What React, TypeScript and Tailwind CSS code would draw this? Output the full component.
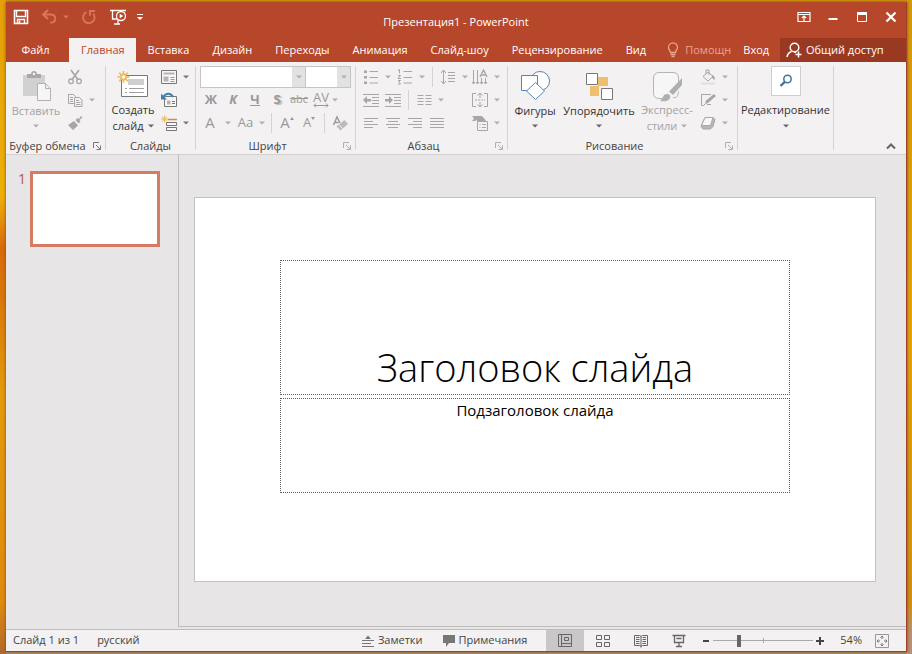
import { useState } from "react";
import type { ReactNode } from "react";

const TABS = ["Главная", "Вставка", "Дизайн", "Переходы", "Анимация", "Слайд-шоу", "Рецензирование", "Вид"];

function Caret({ className = "text-[#b0afb0]" }: { className?: string }) {
  return (
    <svg width="6" height="4" viewBox="0 0 6 4" className={`shrink-0 ${className}`}>
      <path d="M0 0.5h6L3 3.5z" fill="currentColor" />
    </svg>
  );
}

function Icon({ size = 16, children }: { size?: number; children: ReactNode }) {
  return (
    <svg
      width={size}
      height={size}
      viewBox={`0 0 ${size} ${size}`}
      fill="none"
      stroke="currentColor"
      className="shrink-0"
    >
      {children}
    </svg>
  );
}

function Tool({
  label,
  caret,
  className = "w-[22px]",
  children,
}: {
  label: string;
  caret?: string;
  className?: string;
  children: ReactNode;
}) {
  return (
    <button aria-label={label} className={`flex h-[23px] shrink-0 items-center justify-center ${className}`}>
      {children}
      {caret && (
        <span className="flex w-3 shrink-0 justify-end">
          <Caret className={caret} />
        </span>
      )}
    </button>
  );
}

function BigTool({
  icon,
  lines,
  muted,
  className,
}: {
  icon: ReactNode;
  lines: string[];
  muted?: boolean;
  className: string;
}) {
  const caret = <Caret className={muted ? "text-[#b0afb0]" : "text-[#666]"} />;
  return (
    <button
      className={`flex shrink-0 flex-col items-center pt-1 leading-4 whitespace-nowrap ${className} ${
        muted ? "text-[#a3a2a3]" : "text-[#333]"
      }`}
    >
      <span className="flex h-9 items-center justify-center">{icon}</span>
      <span>{lines[0]}</span>
      <span className="flex h-4 items-center gap-1">
        {lines[1]}
        {caret}
      </span>
    </button>
  );
}

function Group({
  label,
  launcher,
  className,
  children,
}: {
  label?: string;
  launcher?: string;
  className: string;
  children: ReactNode;
}) {
  return (
    <section className={`flex shrink-0 py-1 ${className}`}>
      <div className="flex min-w-0 flex-1 flex-col border-r border-[#d4d3d4]">
        <div className="-mt-1 flex h-[72px] pt-[3px]">{children}</div>
        <div className="mt-1 flex h-4 items-center text-[#444]">
          <span className="flex-1 text-center whitespace-nowrap">{label}</span>
          {launcher && (
            <button aria-label={`${label}: параметры`} className={`flex w-4 justify-center ${launcher}`}>
              <svg width="8" height="8" viewBox="0 0 8 8" fill="none" stroke="currentColor">
                <path d="M0.5 6V0.5H6M3 3l4 4M7.5 3.5v4h-4" />
              </svg>
            </button>
          )}
        </div>
      </div>
    </section>
  );
}

const Separator = () => <span className="h-5 w-px shrink-0 bg-[#d4d3d4]" />;

function Lines({ rows }: { rows: [number, number][] }) {
  return (
    <Icon>
      {rows.map(([x, w], i) => (
        <path key={i} d={`M${x} ${3.5 + i * 3}h${w}`} />
      ))}
    </Icon>
  );
}

function TitleBar() {
  return (
    <header className="grid h-9 shrink-0 grid-cols-[1fr_auto_1fr] items-center text-white">
      <div className="flex items-center pb-1.5 pl-[7px]">
        <button aria-label="Сохранить">
          <Icon>
            <path d="M1.500 1.500h13v13h-13z" strokeWidth="1.600" />
            <path d="M3.500 2v5.500h9V2M4.500 14.500v-4h7v4" strokeWidth="1.400" />
            <path d="M6.500 11.500v3" strokeWidth="1.600" />
          </Icon>
        </button>
        <button aria-label="Отменить" className="ml-3 flex items-center gap-1.5 text-[#d9755c]">
          <Icon>
            <path d="M2.500 5.500H9.500c3 0 4.700 1.600 4.700 4s-1.700 4.200-5 4.200" strokeWidth="2" />
            <path d="M7 1L2.200 5.500 7 10" strokeWidth="2.200" />
          </Icon>
          <Caret className="text-[#d9755c]" />
        </button>
        <button aria-label="Повторить" className="ml-3 text-[#d9755c]">
          <Icon>
            <path d="M5.500 3A5.800 5.800 0 1 0 12.200 4.500" strokeWidth="1.900" />
            <path d="M9 6.800V2h5" strokeWidth="1.900" />
          </Icon>
        </button>
        <button aria-label="С начала" className="ml-3">
          <Icon size={18}>
            <path d="M1 2.500h16M3.500 3v8H8M5 16h6M9 12v4" strokeWidth="1.300" />
            <circle cx="12" cy="8" r="4.500" fill="#b7472a" strokeWidth="1.300" />
            <path d="M10.700 5.700v4.600l3.600-2.300z" fill="currentColor" stroke="none" />
          </Icon>
        </button>
        <button aria-label="Настройка панели" className="ml-2.5">
          <svg width="6" height="7" viewBox="0 0 6 7" fill="currentColor">
            <path d="M0 0h6v1H0zM0 3h6L3 6z" />
          </svg>
        </button>
      </div>
      <h1 className="pt-1 leading-4">Презентация1 - PowerPoint</h1>
      <div className="flex items-center justify-end gap-[13px] pr-[7px] pb-1.5">
        <button aria-label="Параметры ленты">
          <Icon>
            <path d="M2 3.500h12v9H2zM2 5.500h12M8 12V7M5.800 9L8 7l2.200 2" strokeWidth="1.200" />
          </Icon>
        </button>
        <button aria-label="Свернуть">
          <Icon>
            <path d="M3.500 10h9" strokeWidth="2" />
          </Icon>
        </button>
        <button aria-label="Развернуть">
          <Icon>
            <path d="M3.500 4.500h9v8h-9z" />
            <path d="M3 4.500h10" strokeWidth="3" />
          </Icon>
        </button>
        <button aria-label="Закрыть">
          <Icon>
            <path d="M3.500 3.500l9 9M12.500 3.500l-9 9" strokeWidth="2.200" />
          </Icon>
        </button>
      </div>
    </header>
  );
}

function RibbonTabs({ active, onSelect }: { active: string; onSelect: (tab: string) => void }) {
  return (
    <nav className="flex h-6 shrink-0 items-center text-white">
      <button className="w-[63px] shrink-0 pr-1">Файл</button>
      {TABS.map((tab) => (
        <button
          key={tab}
          onClick={() => onSelect(tab)}
          className={`h-full shrink-0 pr-[11px] pl-3 whitespace-nowrap ${
            tab === active ? "bg-[#f3f1f2] text-[#b7472a]" : ""
          }`}
        >
          {tab}
        </button>
      ))}
      <button className="flex items-center gap-1 pl-2 text-[#eba48f]">
        <Icon>
          <path
            d="M5.500 10.500C5.500 8.500 3.500 8 3.500 5.300a4.500 4.500 0 0 1 9 0c0 2.700-2 3.200-2 5.200zM5.500 12.500h5M6.500 14.500h3"
            strokeWidth="1.300"
          />
        </Icon>
        Помощн
      </button>
      <button className="ml-3">Вход</button>
      <button className="ml-auto flex h-full w-[126px] shrink-0 items-center gap-1 bg-[#9a3922] pl-1.5 whitespace-nowrap">
        <Icon>
          <circle cx="8.500" cy="5.500" r="4.300" strokeWidth="1.500" />
          <path d="M1 15c.5-3 2-4.700 4.500-5.500M8 9.500l2 1.500M12.500 9.500v6M9.500 12.500h6" strokeWidth="1.500" />
        </Icon>
        Общий доступ
      </button>
    </nav>
  );
}

function ClipboardGroup() {
  return (
    <Group label="Буфер обмена" launcher="text-[#777]" className="w-[100px]">
      <BigTool
        muted
        className="w-[60px]"
        lines={["Вставить"]}
        icon={
          <Icon size={32}>
            <path d="M3 5h22v21H3z" fill="#d2d1d2" stroke="none" />
            <path d="M7 8V4h4c0-4 6-4 6 0h4v4z" fill="#a9a8a9" stroke="none" />
            <circle cx="14" cy="4" r="1.300" fill="#f3f1f2" stroke="none" />
            <path d="M17.500 13.500h8l5 5v12h-13zM25.500 13.500v5h5" fill="#f7f6f7" stroke="#b2b1b2" />
          </Icon>
        }
      />
      <div className="flex flex-col pl-px text-[#a8a7a8]">
        <Tool label="Вырезать" className="w-4">
          <Icon>
            <path d="M4 1l6.500 9M12 1L5.500 10" strokeWidth="1.700" />
            <circle cx="4" cy="12.300" r="2.300" strokeWidth="1.300" />
            <circle cx="12" cy="12.300" r="2.300" strokeWidth="1.300" />
          </Icon>
        </Tool>
        <Tool label="Копировать" className="w-7" caret="text-[#b0afb0]">
          <Icon>
            <path d="M1.500 2.500h5l2 2v7h-7zM3 5.500h3M3 7.500h3M3 9.500h3" />
            <path d="M7.500 5.500h5l2.500 2.500v6.500H7.500z" fill="#f3f1f2" />
            <path d="M9 8.500h3M9 10.500h4.500M9 12.500h4.500" />
          </Icon>
        </Tool>
        <Tool label="Формат по образцу" className="w-4">
          <Icon>
            <path
              d="M1 10l6-4 4 4.500-5 4.500zM8.500 5l2-2 1.500 1 2-3 1.500 1.500-3 2.500 1 1.500-2 2z"
              fill="currentColor"
              stroke="none"
            />
          </Icon>
        </Tool>
      </div>
    </Group>
  );
}

function SlidesGroup() {
  return (
    <Group label="Слайды" className="w-[90px]">
      <BigTool
        className="w-[54px]"
        lines={["Создать", "слайд"]}
        icon={
          <Icon size={32}>
            <path d="M4.500 5.500h26v21h-26z" fill="#fff" stroke="#777" />
            <path d="M11 9h16v6H11z" fill="#d0cfd0" stroke="none" />
            <path d="M8 18.500h2M12 18.500h15M8 22.500h2M12 22.500h15" stroke="#a0a0a0" />
            <path
              d="M6.500 1v12M.5 7h12M2.200 2.700l8.600 8.600M10.800 2.700l-8.600 8.600"
              stroke="#edb95c"
              strokeWidth="1.600"
            />
            <circle cx="6.500" cy="7" r="2.600" fill="#fffaf0" stroke="#edb95c" strokeWidth="1.600" />
          </Icon>
        }
      />
      <div className="flex flex-col pl-px text-[#777]">
        <Tool label="Макет" caret="text-[#777]" className="w-7">
          <Icon>
            <path d="M.5 1.500h15v13H.5z" fill="#f8f7f8" />
            <path d="M2.500 3.500h11v2h-11zM2.500 7.500h5v5h-5z" fill="#b5b4b5" stroke="none" />
            <path d="M9.500 8.500h4M9.500 10.500h4M9.500 12.500h4" stroke="#999" />
          </Icon>
        </Tool>
        <Tool label="Сбросить" className="w-4">
          <Icon>
            <path d="M3.500 4.500h12v10h-12z" fill="#f8f7f8" />
            <path d="M6 8.500h3.500v4H6z" fill="#b5b4b5" stroke="none" />
            <path d="M11 9.500h3M11 11.500h3" />
            <path d="M12 5C10 0.500 5 0.500 2 5" stroke="#4080b0" strokeWidth="2" />
            <path d="M0 1.500v6h6z" fill="#4080b0" stroke="none" />
          </Icon>
        </Tool>
        <Tool label="Раздел" caret="text-[#777]" className="w-7">
          <Icon>
            <path d="M3.500 .5v7M0 4h7M1 1.500l5 5M6 1.500l-5 5" stroke="#edb95c" />
            <path d="M7 4.500h9" stroke="#d78a3c" strokeWidth="1.500" />
            <path d="M5.500 7.500h10v3h-10zM5.500 12.500h10v3h-10z" fill="#f8f7f8" />
          </Icon>
        </Tool>
      </div>
    </Group>
  );
}

function FontGroup() {
  return (
    <Group label="Шрифт" launcher="text-[#b0afb0]" className="w-[160px]">
      <div className="flex flex-col pl-1 text-[#9a999a]">
        <div className="flex h-[23px] items-center">
          <div className="flex h-[22px] w-[106px] items-center border border-[#c6c5c6] bg-white">
            <input aria-label="Шрифт" className="h-full min-w-0 flex-1 px-1 outline-none" />
            <button
              aria-label="Список шрифтов"
              className="flex h-full w-[13px] items-center justify-center bg-[#e3e2e3]"
            >
              <Caret />
            </button>
          </div>
          <div className="-ml-px flex h-[22px] w-[46px] items-center border border-[#c6c5c6] bg-white">
            <input aria-label="Размер шрифта" className="h-full min-w-0 flex-1 px-1 outline-none" />
            <button
              aria-label="Список размеров"
              className="flex h-full w-[13px] items-center justify-center bg-[#e3e2e3]"
            >
              <Caret />
            </button>
          </div>
        </div>
        <div className="flex h-[23px] items-center text-[13px]">
          <Tool label="Полужирный">
            <b>Ж</b>
          </Tool>
          <Tool label="Курсив">
            <b className="italic">К</b>
          </Tool>
          <Tool label="Подчеркнутый">
            <b className="border-b border-current leading-3">Ч</b>
          </Tool>
          <Tool label="Тень текста">
            <b className="text-shadow-[2px_1px_1px_#bbb]">S</b>
          </Tool>
          <Tool label="Зачеркнутый">
            <span className="text-[11px] line-through">abc</span>
          </Tool>
          <Tool label="Интервал между знаками">
            <span className="flex flex-col items-center leading-3">
              AV
              <svg width="16" height="5" viewBox="0 0 16 5" fill="none" stroke="currentColor">
                <path d="M1 2.500h14M3 .5l-2 2 2 2M13 .5l2 2-2 2" />
              </svg>
            </span>
          </Tool>
          <Caret />
        </div>
        <div className="flex h-[23px] items-center">
          <Tool label="Цвет текста" caret="text-[#b0afb0]" className="w-9 gap-1 text-[15px]">
            A
          </Tool>
          <Tool label="Регистр" caret="text-[#b0afb0]" className="w-[35px] pr-1 text-[13px]">
            Aa
          </Tool>
          <Separator />
          <Tool label="Увеличить размер" className="ml-1 w-[22px] text-[15px]">
            A
            <svg width="4" height="12" viewBox="0 0 4 12" fill="currentColor">
              <path d="M0 3l2-3 2 3z" />
            </svg>
          </Tool>
          <Tool label="Уменьшить размер" className="w-[22px] text-[13px]">
            A
            <svg width="4" height="12" viewBox="0 0 4 12" fill="currentColor">
              <path d="M0 0h4L2 3z" />
            </svg>
          </Tool>
          <span className="w-1" />
          <Separator />
          <Tool label="Очистить форматирование" className="ml-1 w-[22px]">
            <Icon>
              <path d="M1.500 10L5 2l3 6M2.500 7.500h4" strokeWidth="1.400" />
              <path d="M4.500 11.500l8-6.500 3.500 4-7.500 6.500z" fill="#bdbcbd" stroke="none" />
              <path d="M7 9.500l3.500 4" stroke="#f3f1f2" />
            </Icon>
          </Tool>
        </div>
      </div>
    </Group>
  );
}

function ParagraphGroup() {
  return (
    <Group label="Абзац" launcher="text-[#b0afb0]" className="w-[152px]">
      <div className="flex flex-1 justify-between pr-[7px] pl-1 text-[#a8a7a8]">
        <div className="flex flex-col">
          <div className="flex h-[23px] items-center">
            <Tool label="Маркеры" caret="text-[#b0afb0]" className="w-[34px]">
              <Icon>
                <path d="M6.500 2.500H15M6.500 8.500H15M6.500 14H15" />
                <path d="M1 1.500h3v2.500H1zM1 7h3v2.500H1zM1 12.500h3V15H1z" fill="currentColor" stroke="none" />
              </Icon>
            </Tool>
            <Tool label="Нумерация" caret="text-[#b0afb0]" className="w-[34px]">
              <Icon>
                <path d="M6.500 2.500H15M6.500 8.500H15M6.500 14H15M1 1.500l1.500-1v4M1 6.500h2.500L1 9.500h3M1 11.500h2.500L2 13l1.500 2H1" />
              </Icon>
            </Tool>
            <span className="w-1" />
            <Separator />
            <Tool label="Междустрочный интервал" caret="text-[#b0afb0]" className="ml-1.5 w-[30px]">
              <Icon>
                <path d="M3.500 1v14M1 4l2.500-3L6 4M1 12l2.500 3L6 12M8 3.500h7M8 6.500h7M8 9.500h7M8 12.500h7" />
              </Icon>
            </Tool>
          </div>
          <div className="flex h-[23px] items-center">
            <Tool label="Уменьшить отступ">
              <Icon>
                <path d="M0 2.500h16M9 5.500h7M9 8.500h7M9 11.500h7M0 14.500h16" />
                <path d="M0 8l4-4v3h4v2.500H4V12z" fill="currentColor" stroke="none" />
              </Icon>
            </Tool>
            <Tool label="Увеличить отступ">
              <Icon>
                <path d="M0 2.500h16M9 5.500h7M9 8.500h7M9 11.500h7M0 14.500h16" />
                <path d="M8 8L4 4v3H0v2.500h4V12z" fill="currentColor" stroke="none" />
              </Icon>
            </Tool>
            <span className="w-1" />
            <Separator />
            <Tool label="Колонки" caret="text-[#b0afb0]" className="ml-1.5 w-[30px]">
              <Icon>
                <path d="M1.500 3.500h6M9.500 3.500h6M1.500 6.500h6M9.500 6.500h6M1.500 9.500h6M9.500 9.500h6M1.500 12.500h6M9.500 12.500h6" />
              </Icon>
            </Tool>
          </div>
          <div className="flex h-[23px] items-center">
            <Tool label="По левому краю">
              <Lines rows={[[1, 14], [1, 9], [1, 14], [1, 9]]} />
            </Tool>
            <Tool label="По центру">
              <Lines rows={[[1, 14], [3, 10], [1, 14], [3, 10]]} />
            </Tool>
            <Tool label="По правому краю">
              <Lines rows={[[1, 14], [6, 9], [1, 14], [6, 9]]} />
            </Tool>
            <Tool label="По ширине">
              <Lines rows={[[1, 14], [1, 14], [1, 14], [1, 14]]} />
            </Tool>
          </div>
        </div>
        <div className="flex flex-col">
          <Tool label="Направление текста" caret="text-[#b0afb0]" className="w-7">
            <Icon>
              <path d="M1.500 1v14M5.500 1v14M9.500 9v6M13.500 9v6M0 13l1.500 2L3 13M4 13l1.500 2L7 13M8 13l1.500 2 1.500-2M12 13l1.500 2 1.500-2" />
              <path d="M8 8l3.500-7L15 8M9 6h5" strokeWidth="1.400" />
            </Icon>
          </Tool>
          <Tool label="Выравнивание текста" caret="text-[#b0afb0]" className="w-7">
            <Icon>
              <path d="M4 1.500H.5v13H4M12 1.500h3.500v13H12M8 1v5M5.500 3.500L8 1l2.500 2.500M8 10v5M5.500 12.500L8 15l2.500-2.500" />
              <path d="M3 8h10" strokeDasharray="2 1" />
            </Icon>
          </Tool>
          <Tool label="SmartArt" caret="text-[#b0afb0]" className="w-7">
            <Icon>
              <path d="M0 1h10l4 4.500-2 1H5V5L3 6H0l2-2.500z" fill="currentColor" stroke="none" />
              <path d="M5.500 6.500h10v9h-10z" fill="#f3f1f2" />
              <path d="M7.500 9.500h1M10 9.500h4M7.500 12.500h1M10 12.500h4" />
            </Icon>
          </Tool>
        </div>
      </div>
    </Group>
  );
}

function DrawingGroup() {
  return (
    <Group label="Рисование" launcher="text-[#b0afb0]" className="w-[230px]">
      <BigTool
        className="w-[54px]"
        lines={["Фигуры"]}
        icon={
          <Icon size={30}>
            <circle cx="20" cy="10" r="9.500" fill="#fff" stroke="#5585b5" />
            <path d="M1.500 4.500h16v15h-16z" fill="#fff" stroke="#5585b5" />
            <path d="M15.500 11.500l9 8.500-9 8.500-9-8.500z" fill="#fff" stroke="#5585b5" />
          </Icon>
        }
      />
      <BigTool
        className="w-[74px]"
        lines={["Упорядочить"]}
        icon={
          <Icon size={28}>
            <path d="M13 5h10v9H13zM5 14h9v10H5z" fill="#efbf70" stroke="none" />
            <path d="M1.500 1.500h11v11h-11zM16.500 16.500h11v11h-11z" fill="#fff" stroke="#777" />
          </Icon>
        }
      />
      <BigTool
        muted
        className="w-[62px]"
        lines={["Экспресс-", "стили"]}
        icon={
          <Icon size={32}>
            <path
              d="M11 28.500H8c-3 0-5.500-2-5.500-5V8c0-3 2-5.500 5.500-5.500h14c3.500 0 5.500 2 5.500 5.500v4"
              fill="#f7f6f7"
              stroke="#b5b4b5"
            />
            <path
              d="M31 8v7l-9 10-4-3.500zM9 31c3-2 2.500-7 7-7 4 0 4 4 1.500 6-2 1.500-5 1.500-8.500 1z"
              fill="#b0afb0"
              stroke="none"
            />
            <path d="M22 27.500c3 1 5-1 5.500-6" stroke="#b5b4b5" />
          </Icon>
        }
      />
      <div className="flex flex-col text-[#a8a7a8]">
        <Tool label="Заливка фигуры" caret="text-[#b0afb0]" className="w-8">
          <Icon>
            <path d="M3 7.500l5-4.500 5 4.500-5 4.500zM6 5V1h3v5" />
            <path d="M12 6c3 1 3 3 2.500 5L12 9z" fill="currentColor" stroke="none" />
            <path d="M1 14.500h14" stroke="#e0dfe0" strokeWidth="2" />
          </Icon>
        </Tool>
        <Tool label="Контур фигуры" caret="text-[#b0afb0]" className="w-8">
          <Icon>
            <path d="M11 2.500H1.500v11h2l2-2M7 12.500h4" />
            <path d="M5 12l1-3.500 8-6.500 2 2-8 7z" fill="currentColor" stroke="none" />
          </Icon>
        </Tool>
        <Tool label="Эффекты фигуры" caret="text-[#b0afb0]" className="w-8">
          <Icon>
            <path d="M5 2.500h8l2 2-2 7-2.500 2.500H3l-2-2.500z" fill="#b8b7b8" />
            <path d="M5 2.500h8l-2.500 8H1.500z" fill="#f8f7f8" />
          </Icon>
        </Tool>
      </div>
    </Group>
  );
}

function Ribbon() {
  return (
    <div className="flex h-[93px] shrink-0 border-b border-[#d2d0d1] bg-[#f3f1f2]">
      <ClipboardGroup />
      <SlidesGroup />
      <FontGroup />
      <ParagraphGroup />
      <DrawingGroup />
      <Group className="w-24">
        <button className="flex flex-1 flex-col items-center pt-px leading-4 text-[#333]">
          <span className="flex size-[30px] items-center justify-center border border-[#cfcecf] bg-white text-[#41719c]">
            <Icon>
              <circle cx="9.500" cy="6" r="3.700" strokeWidth="1.500" />
              <path d="M6.800 8.800L2.500 13" strokeWidth="2.400" />
            </Icon>
          </span>
          <span className="mt-1.5">Редактирование</span>
          <span className="flex h-4 items-center">
            <Caret className="text-[#666]" />
          </span>
        </button>
      </Group>
      <button aria-label="Свернуть ленту" className="mr-2.5 mb-1 ml-auto flex items-end text-[#666]">
        <svg width="10" height="8" viewBox="0 0 10 8" fill="none" stroke="currentColor" strokeWidth="2">
          <path d="M1 6.500l4-4 4 4" />
        </svg>
      </button>
    </div>
  );
}

function Workspace() {
  return (
    <main className="flex min-h-0 flex-1 bg-[#e7e5e6]">
      <aside className="flex w-[172px] shrink-0 items-start gap-1.5 pt-4 pl-3">
        <span className="w-1.5 text-[14px] leading-4 text-[#b9573d]">1</span>
        <button aria-label="Слайд 1" className="h-[76px] w-[130px] border-[3px] border-[#d37b63] bg-white" />
      </aside>
      <section className="mb-0.5 min-w-0 flex-1 border-b border-l border-[#bdbbbc] pt-[42px] pr-[30px] pl-[15px]">
        <div className="grid aspect-[39/22] grid-cols-1 grid-rows-[62fr_135fr_3fr_95fr_88fr] justify-items-center border border-[#c3c1c2] bg-white">
          <h2 className="row-start-2 flex w-3/4 items-end justify-center border border-dotted border-[#5f5a5f] text-[38px] leading-[54px] font-light whitespace-nowrap text-black">
            Заголовок слайда
          </h2>
          <p className="row-start-4 w-3/4 border border-dotted border-[#5f5a5f] text-center text-[15px] leading-[22px] text-black">
            Подзаголовок слайда
          </p>
        </div>
      </section>
    </main>
  );
}

function StatusBar() {
  const [zoom, setZoom] = useState(25);
  return (
    <footer className="flex h-[22px] shrink-0 items-center border-t border-[#bdbbbc] bg-[#f3f1f2] pl-[7px] whitespace-nowrap text-[#444]">
      <span>Слайд 1 из 1</span>
      <button className="ml-[18px]">русский</button>
      <button className="ml-auto flex items-center gap-1">
        <svg width="12" height="12" viewBox="0 0 12 12" fill="none" stroke="#777">
          <path d="M0 5.500h12M0 8.500h9M0 11.500h12" />
          <path d="M3 4l3-3.500L9 4z" fill="#777" stroke="none" />
        </svg>
        Заметки
      </button>
      <button className="ml-5 flex items-center gap-1">
        <svg width="12" height="12" viewBox="0 0 12 12" fill="#777">
          <path d="M0 0h12v8H6l-3 4V8H0z" />
        </svg>
        Примечания
      </button>
      <div className="ml-[19px] flex h-full text-[#666]">
        <button aria-label="Обычный" className="flex w-[38px] items-center justify-center bg-[#c9c7c8]">
          <Icon>
            <path d="M1.500 1.500h13v12h-13zM4.500 1.500v12M5 10.500h9.500M7.500 4.500h4v3h-4z" />
          </Icon>
        </button>
        <button aria-label="Сортировщик слайдов" className="flex w-[38px] items-center justify-center">
          <Icon>
            <path d="M1.500 2.500h5v4h-5zM9.500 2.500h5v4h-5zM1.500 9.500h5v4h-5zM9.500 9.500h5v4h-5z" />
          </Icon>
        </button>
        <button aria-label="Режим чтения" className="flex w-[38px] items-center justify-center">
          <Icon>
            <path d="M1.500 2.500h5l1.500 1 1.500-1h5v10h-5l-1.500 1-1.500-1h-5zM8 3.500v11M3 4.500h3.500M3 6.500h3.500M3 8.500h3.500M3 10.500h3.500M9.500 4.500H13M9.500 6.500H13M9.500 8.500H13M9.500 10.500H13" />
          </Icon>
        </button>
        <button aria-label="Показ слайдов" className="flex w-[38px] items-center justify-center">
          <Icon>
            <path d="M1.500 2.500h13M3.500 3v6.500h9V3M8 9.500v4M5 13.500h6M5.500 5.500h5" strokeWidth="1.300" />
          </Icon>
        </button>
      </div>
      <button aria-label="Уменьшить" className="ml-1">
        <svg width="8" height="8" viewBox="0 0 8 8" stroke="currentColor" strokeWidth="2">
          <path d="M1 4h6" />
        </svg>
      </button>
      <input
        type="range"
        aria-label="Масштаб"
        value={zoom}
        onChange={(e) => setZoom(Number(e.target.value))}
        className="mx-[3px] h-3 w-[100px] appearance-none bg-[linear-gradient(#aaa,#aaa),linear-gradient(#aaa,#aaa)] bg-[length:100%_1px,1px_5px] bg-center bg-no-repeat outline-none [&::-webkit-slider-thumb]:h-3 [&::-webkit-slider-thumb]:w-1 [&::-webkit-slider-thumb]:appearance-none [&::-webkit-slider-thumb]:bg-[#666]"
      />
      <button aria-label="Увеличить">
        <svg width="8" height="8" viewBox="0 0 8 8" stroke="currentColor" strokeWidth="2">
          <path d="M0 4h8M4 0v8" />
        </svg>
      </button>
      <button className="ml-4">54%</button>
      <button aria-label="Вписать слайд" className="mr-4 ml-3 text-[#777]">
        <Icon>
          <path d="M1.500 1.500h13v13h-13z" stroke="#999" />
          <path d="M8 3V6M8 10v3M3 8H6M10 8h3M6.500 4.500L8 3l1.500 1.500M6.500 11.500L8 13l1.500-1.500M4.500 6.500L3 8l1.500 1.500M11.500 6.500L13 8l-1.500 1.500" />
        </Icon>
      </button>
    </footer>
  );
}

export default function App() {
  const [tab, setTab] = useState("Главная");
  return (
    <div className="flex min-h-screen bg-[linear-gradient(#e3a008,#eeb00a_30%,#d9690a_38%,#d9760a_45%,#e39a0c_60%,#e08a0e_92%,#b06a2a),linear-gradient(#d3980c,#e3a50a_50%,#d0900f_92%,#b79078_97%)] bg-[length:6px_100%,100%_100%] bg-no-repeat pt-0.5 pr-[5px] pb-0.5 pl-1.5 font-['Open_Sans','Noto_Sans',sans-serif] text-[11px]">
      <div className="flex min-w-0 flex-1 flex-col border-r border-b border-[#a0402a] bg-[#b7472a] shadow-[0_0_3px_#7a4a00]">
        <TitleBar />
        <RibbonTabs active={tab} onSelect={setTab} />
        <Ribbon />
        <Workspace />
        <StatusBar />
      </div>
    </div>
  );
}
